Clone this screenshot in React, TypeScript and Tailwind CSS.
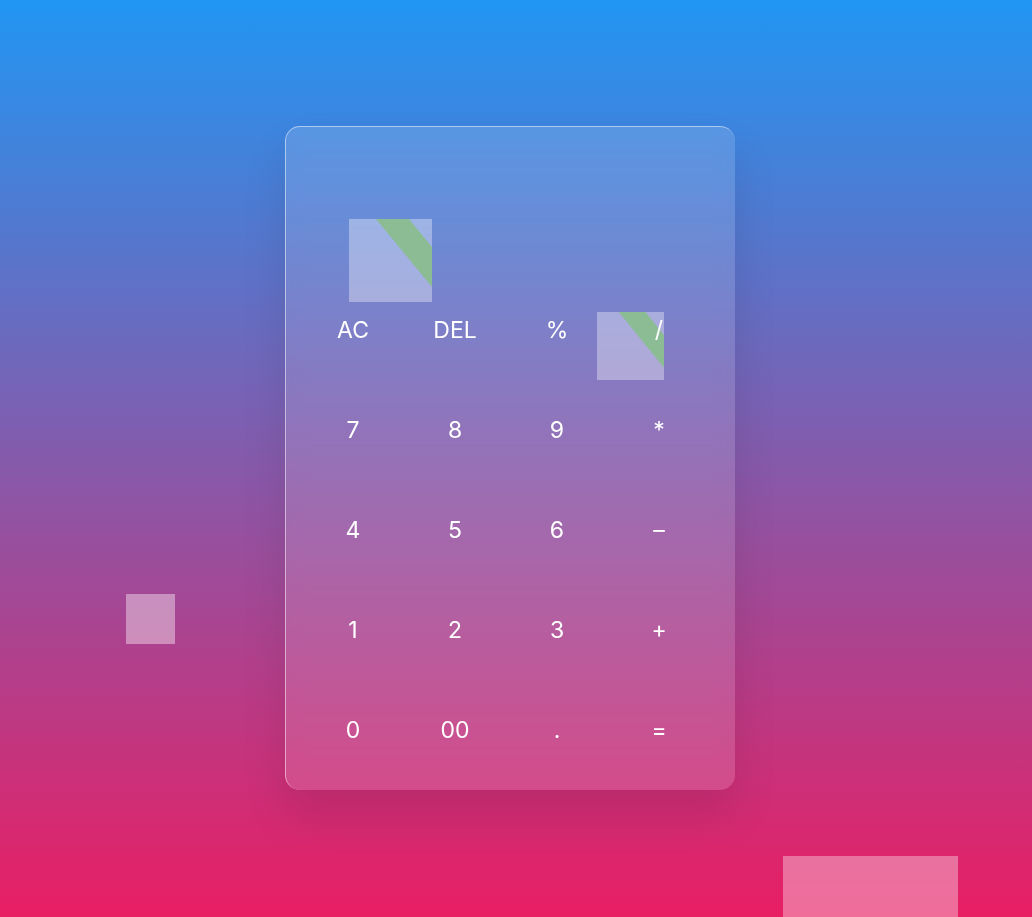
const keys = [
  "AC", "DEL", "%", "/",
  "7", "8", "9", "*",
  "4", "5", "6", "-",
  "1", "2", "3", "+",
  "0", "00", ".", "=",
];

function Tile({ className }: { className: string }) {
  return (
    <div className={`absolute bg-white/35 overflow-hidden ${className}`}>
      <svg className="w-full h-full" viewBox="0 0 83 83" preserveAspectRatio="none">
        <polygon points="27,0 60,0 83,28 83,68" fill="#8bbc94" />
      </svg>
    </div>
  );
}

export default function App() {
  return (
    <div
      className="relative min-h-screen overflow-hidden bg-[linear-gradient(to_bottom,#2196f3,#e91e63)] flex items-center justify-center pr-[12px] pb-[1px]"
      style={{ fontFamily: "Inter, 'Noto Sans', sans-serif" }}
    >
      {/* background squares */}
      <div className="absolute left-[126px] top-[594px] w-[49px] h-[50px] bg-white/40" />
      <div className="absolute left-[783px] top-[856px] w-[175px] h-[175px] bg-white/35" />

      {/* calculator */}
      <div className="relative w-[450px] h-[664px] rounded-[15px] bg-white/[0.14] border-t border-l border-white/50 backdrop-blur-sm shadow-[0_25px_45px_rgba(0,0,0,0.1)]">
        <Tile className="left-[63px] top-[92px] w-[83px] h-[83px]" />
        <Tile className="left-[311px] top-[185px] w-[67px] h-[68px]" />

        <div className="relative z-10 pt-[153px] pl-[16px] grid grid-cols-[repeat(4,102px)] auto-rows-[100px]">
          {keys.map((k) => (
            <button
              key={k}
              className="flex items-center justify-center text-white text-[23px] font-normal"
            >
              {k === "-" ? "–" : k}
            </button>
          ))}
        </div>
      </div>
    </div>
  );
}
